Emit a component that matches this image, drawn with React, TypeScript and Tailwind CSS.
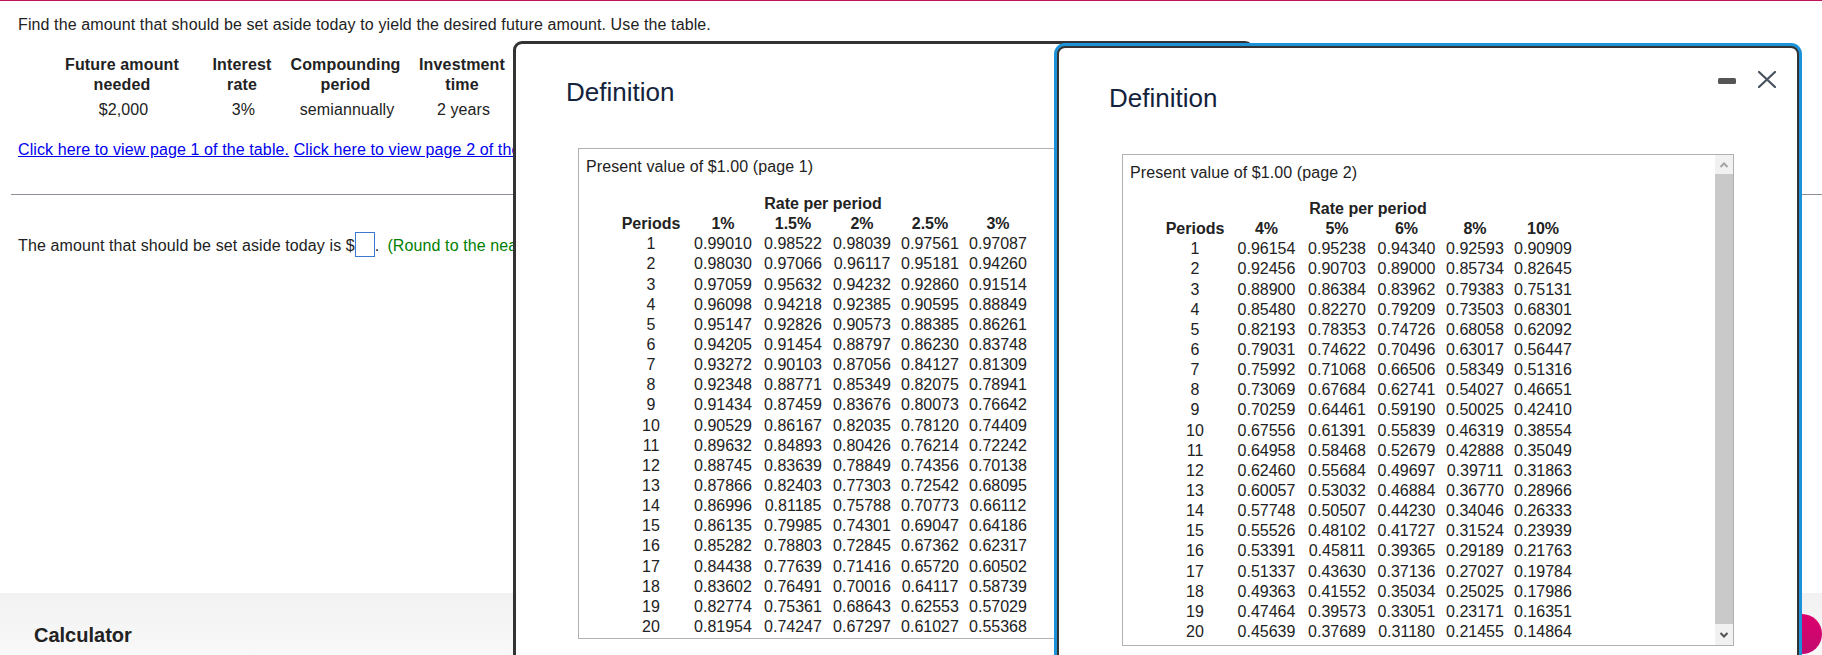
const PAGE_1 = {
  rates: ["1%", "1.5%", "2%", "2.5%", "3%"],
  rows: [
    ["0.99010", "0.98522", "0.98039", "0.97561", "0.97087"],
    ["0.98030", "0.97066", "0.96117", "0.95181", "0.94260"],
    ["0.97059", "0.95632", "0.94232", "0.92860", "0.91514"],
    ["0.96098", "0.94218", "0.92385", "0.90595", "0.88849"],
    ["0.95147", "0.92826", "0.90573", "0.88385", "0.86261"],
    ["0.94205", "0.91454", "0.88797", "0.86230", "0.83748"],
    ["0.93272", "0.90103", "0.87056", "0.84127", "0.81309"],
    ["0.92348", "0.88771", "0.85349", "0.82075", "0.78941"],
    ["0.91434", "0.87459", "0.83676", "0.80073", "0.76642"],
    ["0.90529", "0.86167", "0.82035", "0.78120", "0.74409"],
    ["0.89632", "0.84893", "0.80426", "0.76214", "0.72242"],
    ["0.88745", "0.83639", "0.78849", "0.74356", "0.70138"],
    ["0.87866", "0.82403", "0.77303", "0.72542", "0.68095"],
    ["0.86996", "0.81185", "0.75788", "0.70773", "0.66112"],
    ["0.86135", "0.79985", "0.74301", "0.69047", "0.64186"],
    ["0.85282", "0.78803", "0.72845", "0.67362", "0.62317"],
    ["0.84438", "0.77639", "0.71416", "0.65720", "0.60502"],
    ["0.83602", "0.76491", "0.70016", "0.64117", "0.58739"],
    ["0.82774", "0.75361", "0.68643", "0.62553", "0.57029"],
    ["0.81954", "0.74247", "0.67297", "0.61027", "0.55368"],
  ],
  cols: ["w-[74px]", "w-[70px]", "w-[70px]", "w-[68px]", "w-[68px]", "w-[68px]"],
};

const PAGE_2 = {
  rates: ["4%", "5%", "6%", "8%", "10%"],
  rows: [
    ["0.96154", "0.95238", "0.94340", "0.92593", "0.90909"],
    ["0.92456", "0.90703", "0.89000", "0.85734", "0.82645"],
    ["0.88900", "0.86384", "0.83962", "0.79383", "0.75131"],
    ["0.85480", "0.82270", "0.79209", "0.73503", "0.68301"],
    ["0.82193", "0.78353", "0.74726", "0.68058", "0.62092"],
    ["0.79031", "0.74622", "0.70496", "0.63017", "0.56447"],
    ["0.75992", "0.71068", "0.66506", "0.58349", "0.51316"],
    ["0.73069", "0.67684", "0.62741", "0.54027", "0.46651"],
    ["0.70259", "0.64461", "0.59190", "0.50025", "0.42410"],
    ["0.67556", "0.61391", "0.55839", "0.46319", "0.38554"],
    ["0.64958", "0.58468", "0.52679", "0.42888", "0.35049"],
    ["0.62460", "0.55684", "0.49697", "0.39711", "0.31863"],
    ["0.60057", "0.53032", "0.46884", "0.36770", "0.28966"],
    ["0.57748", "0.50507", "0.44230", "0.34046", "0.26333"],
    ["0.55526", "0.48102", "0.41727", "0.31524", "0.23939"],
    ["0.53391", "0.45811", "0.39365", "0.29189", "0.21763"],
    ["0.51337", "0.43630", "0.37136", "0.27027", "0.19784"],
    ["0.49363", "0.41552", "0.35034", "0.25025", "0.17986"],
    ["0.47464", "0.39573", "0.33051", "0.23171", "0.16351"],
    ["0.45639", "0.37689", "0.31180", "0.21455", "0.14864"],
  ],
  cols: ["w-[72px]", "w-[71px]", "w-[70px]", "w-[69px]", "w-[68px]", "w-[68px]"],
};

function RateTable({ data, className }: { data: typeof PAGE_1; className: string }) {
  return (
    <table className={`table-fixed border-collapse text-center text-[16px] leading-[20px] text-[#222] ${className}`}>
      <colgroup>
        {data.cols.map((c, i) => (
          <col key={i} className={c} />
        ))}
      </colgroup>
      <thead>
        <tr className="h-[20.15px]">
          <th colSpan={6} className="p-0 font-bold">
            Rate per period
          </th>
        </tr>
        <tr className="h-[20.15px]">
          <th className="p-0 font-bold">Periods</th>
          {data.rates.map((r) => (
            <th key={r} className="p-0 font-bold">
              {r}
            </th>
          ))}
        </tr>
      </thead>
      <tbody>
        {data.rows.map((row, i) => (
          <tr key={i} className="h-[20.15px]">
            <td className="p-0">{i + 1}</td>
            {row.map((v, j) => (
              <td key={j} className="p-0">
                {v}
              </td>
            ))}
          </tr>
        ))}
      </tbody>
    </table>
  );
}

function Scrollbar() {
  return (
    <div className="flex w-[18px] shrink-0 flex-col bg-[#f1f1f1]">
      <div className="flex h-[19px] items-center justify-center">
        <svg width="10" height="8" viewBox="0 0 10 8" fill="none" stroke="#a3a3a3" strokeWidth="2">
          <path d="M1.5 6 5 2.5 8.5 6" />
        </svg>
      </div>
      <div className="flex-1 bg-[#c9c9c9]" />
      <div className="flex h-[21px] items-center justify-center">
        <svg width="10" height="8" viewBox="0 0 10 8" fill="none" stroke="#505050" strokeWidth="2">
          <path d="M1.5 2 5 5.5 8.5 2" />
        </svg>
      </div>
    </div>
  );
}

export default function App() {
  return (
    <div className="relative flex h-screen flex-col overflow-hidden bg-white font-['Liberation_Sans',Arial,sans-serif] text-[16px] leading-[20px] text-[#222]">
      <div className="h-px shrink-0 bg-[#c4115c]" />

      <p className="mt-[14px] pl-[18px] tracking-[0.11px]">
        Find the amount that should be set aside today to yield the desired future amount. Use the table.
      </p>

      <div className="mt-[20px] ml-[41px] grid w-[473px] grid-cols-[164px_76px_131px_102px] text-center">
        <div className="pr-[2px] font-bold tracking-[0.15px]">
          Future amount
          <br />
          needed
        </div>
        <div className="pr-[2px] font-bold tracking-[0.15px]">
          Interest
          <br />
          rate
        </div>
        <div className="pr-[2px] font-bold tracking-[0.15px]">
          Compounding
          <br />
          period
        </div>
        <div className="pr-[2px] font-bold tracking-[0.15px]">
          Investment
          <br />
          time
        </div>
        <div className="mt-[5px] pl-[1px] tracking-[0.1px]">$2,000</div>
        <div className="mt-[5px] pl-[1px] tracking-[0.1px]">3%</div>
        <div className="mt-[5px] pl-[1px] tracking-[0.1px]">semiannually</div>
        <div className="mt-[5px] pl-[1px] tracking-[0.1px]">2 years</div>
      </div>

      <p className="mt-[20px] pl-[18px] tracking-[0.11px] whitespace-nowrap text-[#0000ee]">
        <span className="underline">Click here to view page 1 of the table.</span>{" "}
        <span className="underline">Click here to view page 2 of the table.</span>
      </p>

      <div className="mt-[34px] ml-[11px] h-px bg-[#8a8f99]" />

      <div className="mt-[37px] flex items-center pl-[18px] tracking-[0.11px] whitespace-nowrap">
        <span className="pt-[2px]">The amount that should be set aside today is $</span>
        <span className="h-[25px] w-[20px] shrink-0 border border-[#3c78d0]" />
        <span className="pt-[2px]">.</span>
        <span className="ml-[8px] pt-[2px] text-[#008000]">(Round to the nearest dollar as needed.)</span>
      </div>

      <div className="mt-auto h-[62px] shrink-0 bg-gradient-to-b from-[#f1f1f1] to-[#f9f9f9] pt-[30px] pl-[34px] text-[20px] leading-[24px] font-bold text-[#222]">
        Calculator
      </div>

      <div className="absolute top-[614px] left-[1782px] h-[40px] w-[40px] rounded-full bg-gradient-to-b from-[#dc006c] to-[#c20a70]" />

      {/* page 1 window, sits behind page 2 */}
      <div className="absolute top-[41px] left-[513px] h-[700px] w-[741px] rounded-[9px] border-[3px] border-[#333] bg-white">
        <h2 className="pt-[32px] pl-[50px] text-[26px] leading-[32px] font-normal text-[#14233c]">Definition</h2>
        <div className="mt-[40px] ml-[62px] h-[491px] w-[612px] border border-[#b0b0b0] pt-[8px] pl-[7px]">
          <div className="tracking-[0.1px]">Present value of $1.00 (page 1)</div>
          <RateTable data={PAGE_1} className="mt-[17px] ml-[28px]" />
        </div>
      </div>

      {/* page 2 window, has focus */}
      <div className="absolute top-[46px] left-[1057px] h-[700px] w-[742px] rounded-[8px] border-2 border-[#333] bg-white shadow-[0_0_0_3px_#1c92d8]">
        <div className="absolute top-[30px] left-[659px] h-[6px] w-[18px] rounded-[1.5px] bg-[#555]" />
        <svg
          className="absolute top-[23px] left-[699px]"
          width="18"
          height="17"
          viewBox="0 0 18 17"
          fill="none"
          stroke="#47535f"
          strokeWidth="2.25"
          strokeLinecap="round"
        >
          <path d="M1 1 17 16M17 1 1 16" />
        </svg>
        <h2 className="pt-[34px] pl-[50px] text-[26px] leading-[32px] font-normal text-[#14233c]">Definition</h2>
        <div className="mt-[40px] ml-[63px] flex h-[492px] w-[612px] border border-[#b0b0b0]">
          <div className="flex-1 pt-[8px] pl-[7px]">
            <div className="tracking-[0.1px]">Present value of $1.00 (page 2)</div>
            <RateTable data={PAGE_2} className="mt-[16px] ml-[29px]" />
          </div>
          <Scrollbar />
        </div>
      </div>
    </div>
  );
}
